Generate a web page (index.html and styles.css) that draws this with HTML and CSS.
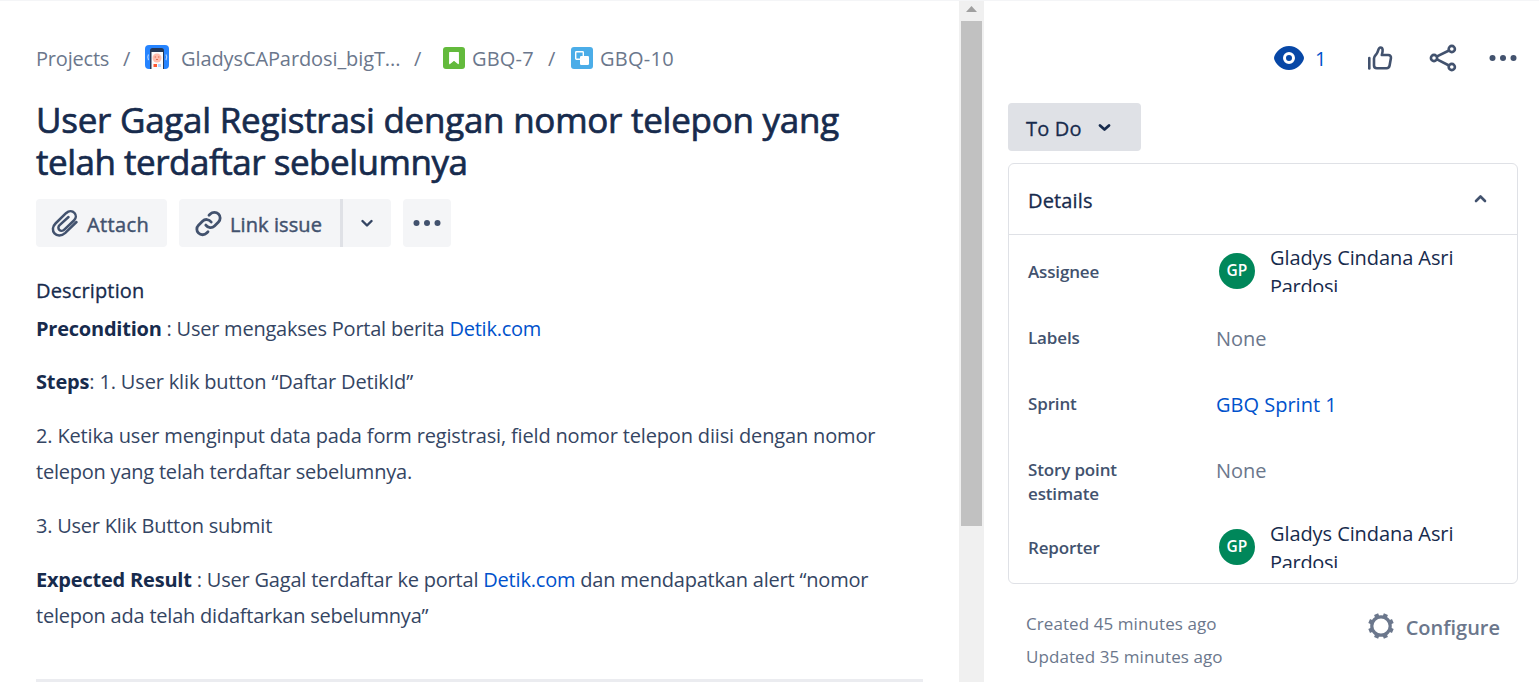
FILE: index.html
```html
<!DOCTYPE html>
<html lang="id">
<head>
<meta charset="utf-8">
<title>GBQ-10</title>
<link rel="stylesheet" href="styles.css">
</head>
<body>
<div class="page">
  <main class="issue">
    <nav class="crumbs">
      <span class="crumb-projects">Projects</span>
      <span class="sep">/</span>
      <svg class="project-icon" width="24" height="24" viewBox="0 0 24 24">
        <rect width="24" height="24" rx="4" fill="#2684ff"/>
        <path d="M3.500 9.500q-1.500 2.800 0 5.600M21 9.500q1.500 2.800 0 5.600" fill="none" stroke="#b3d4ff" stroke-width="1.200"/>
        <path d="M5 24V5.500Q5 3 7.500 3h9Q19 3 19 5.500V24z" fill="#253858"/>
        <path d="M6.500 7h11.500v17H6.500z" fill="#fafbfc"/>
        <circle cx="12" cy="13" r="4.500" fill="#ffbdad"/>
        <path d="M9.600 12h1.400M13 12h1.400M11 14.500h2" stroke="#de6b50" stroke-width="1"/>
        <path d="M8.500 19H12v3H8.500z" fill="#ff5630"/>
        <path d="M13 19h3v3h-3z" fill="#b3d4ff"/>
      </svg>
      <span class="crumb-name">GladysCAPardosi_bigT...</span>
      <span class="sep sep-name">/</span>
      <svg class="type-icon" width="22" height="22" viewBox="0 0 22 22">
        <rect width="22" height="22" rx="3" fill="#63ba3c"/>
        <path d="M6.700 5.600h8.600v11L11 13l-4.300 3.600z" fill="#fff" stroke="#fff" stroke-width="1.200" stroke-linejoin="round"/>
      </svg>
      <span class="crumb-story">GBQ-7</span>
      <span class="sep sep-story">/</span>
      <svg class="type-icon sub" width="22" height="22" viewBox="0 0 22 22">
        <rect width="22" height="22" rx="3" fill="#4bade8"/>
        <rect x="4.700" y="4.700" width="7.600" height="7.600" rx=".7" fill="none" stroke="#fff" stroke-width="1.400"/>
        <rect x="9" y="9" width="9" height="9" rx="1.300" fill="#fff"/>
      </svg>
      <span class="crumb-task">GBQ-10</span>
    </nav>
    <h1 class="title"><span class="title-a">User Gagal Registrasi dengan nomor telepon yang</span><br><span class="title-b">telah terdaftar sebelumnya</span></h1>
    <div class="toolbar">
      <button class="btn attach">
        <svg width="28" height="30" viewBox="0 0 28 30" fill="none" stroke="#42526e" stroke-width="2.500" stroke-linecap="round" stroke-linejoin="round">
          <path d="M25.500 14 14.300 24.800C10.500 28.300 5.800 28 3.500 25.400S1.300 18.600 4.500 15.500L15 5.200c3-2.700 6.500-2.400 8.500-.2s1.700 5.300-.6 7.500L13.300 21.600c-1.500 1.500-3.700 1.500-5 .2s-1.200-3.200.3-4.700L17.500 9"/>
        </svg>
        <span class="label-attach">Attach</span>
      </button>
      <div class="split">
        <button class="btn link">
          <svg width="28" height="28" viewBox="0 0 28 28" fill="none" stroke="#42526e" stroke-width="2.800" stroke-linecap="round">
            <path d="M14 22.800l-1.300 1.300c-2.200 2.200-6 2.200-8.200 0s-2.200-5.700 0-7.900l4-4c2.500-2.500 6.500-2.200 8.700.8"/>
            <path d="M15 6.300l1.300-1.300c2.200-2.200 6-2.200 8.200 0s2.200 5.700 0 7.900l-4 4c-2.500 2.500-6.500 2.200-8.700-.8"/>
          </svg>
          <span class="label-link">Link issue</span>
        </button>
        <button class="btn drop">
          <svg width="12" height="8" viewBox="0 0 12 8"><path d="M1.500 2 6 6.500l4.500-4.500" fill="none" stroke="#344563" stroke-width="2.400" stroke-linecap="round" stroke-linejoin="round"/></svg>
        </button>
      </div>
      <button class="btn more">
        <svg width="28" height="6" viewBox="0 0 28 6" fill="#42526e"><circle cx="3.500" cy="3" r="3"/><circle cx="14" cy="3" r="3"/><circle cx="24.500" cy="3" r="3"/></svg>
      </button>
    </div>
    <h2 class="section">Description</h2>
    <div class="description">
      <p class="d1"><b>Precondition</b> : User mengakses Portal berita <a>Detik.com</a></p>
      <p class="d2"><b>Steps</b>: 1. User klik button “Daftar DetikId”</p>
      <p class="d3"><span class="l1">2. Ketika user menginput data pada form registrasi, field nomor telepon diisi dengan nomor</span><br><span class="l2">telepon yang telah terdaftar sebelumnya.</span></p>
      <p class="d4">3. User Klik Button submit</p>
      <p class="d5"><span class="l1"><b>Expected Result</b> : User Gagal terdaftar ke portal <a>Detik.com</a> dan mendapatkan alert “nomor</span><br><span class="l2">telepon ada telah didaftarkan sebelumnya”</span></p>
    </div>
    <div class="divider"></div>
  </main>
  <div class="scrollbar">
    <svg width="11" height="6" viewBox="0 0 11 6"><path d="M0 6 5.500 0 11 6z" fill="#a0a0a0"/></svg>
    <div class="thumb"></div>
  </div>
  <aside class="side">
    <div class="actions">
      <svg class="eye" width="30" height="24" viewBox="0 0 30 24">
        <path d="M15 0C7 0 1.500 6.500.3 10.500Q-.2 12 .3 13.500C1.500 17.500 7 24 15 24s13.500-6.500 14.700-10.500q.5-1.500 0-3C28.500 6.500 23 0 15 0z" fill="#0747a6"/>
        <circle cx="15" cy="12" r="4.500" fill="#0747a6" stroke="#fff" stroke-width="3"/>
      </svg>
      <span class="watch">1</span>
      <svg class="thumb-up" width="26" height="26" viewBox="0 0 26 26" fill="none" stroke="#42526e" stroke-width="2.600" stroke-linecap="round" stroke-linejoin="round">
        <path d="M2.300 13v10.500"/>
        <path d="M7 20.500v-7c0-2 1-2.700 2.500-4.500 2-2.500 1.500-6.500 4-6.500 2.700 0 2.500 3.500 1.300 7.500h6.500c2 0 2.900 1.500 2.600 3.200l-1.300 7.300c-.4 2-1.500 2.700-3 2.700H9.800c-2 0-2.800-1-2.800-2.700z"/>
      </svg>
      <svg class="share" width="28" height="28" viewBox="0 0 28 28" fill="none" stroke="#42526e" stroke-width="2.600">
        <path d="M8 12.400 20 6.500M8 15.300 20 21.500"/>
        <circle cx="5" cy="14" r="3.100"/><circle cx="22.800" cy="5" r="3.100"/><circle cx="22.800" cy="23" r="3.100"/>
      </svg>
      <svg class="dots" width="28" height="6" viewBox="0 0 28 6" fill="#42526e"><circle cx="3.500" cy="3" r="3"/><circle cx="14" cy="3" r="3"/><circle cx="24.500" cy="3" r="3"/></svg>
    </div>
    <button class="status"><span class="status-text">To Do</span>
      <svg width="13" height="9" viewBox="0 0 13 9"><path d="M2 2.500l4.500 4 4.500-4" fill="none" stroke="#172b4d" stroke-width="2.800" stroke-linecap="round" stroke-linejoin="round"/></svg>
    </button>
    <section class="details">
      <header class="details-head"><span class="details-title">Details</span>
        <svg width="13" height="11" viewBox="0 0 13 11"><path d="M2 7l4.500-4.500L11 7" fill="none" stroke="#42526e" stroke-width="2.600" stroke-linecap="round" stroke-linejoin="round"/></svg>
      </header>
      <dl class="fields">
        <dt class="assignee">Assignee</dt>
        <dd class="person"><span class="avatar">GP</span><span class="who">Gladys Cindana Asri<br><span class="surname">Pardosi</span></span></dd>
        <dt class="labels">Labels</dt><dd class="none">None</dd>
        <dt class="sprint">Sprint</dt><dd class="sprint-value"><a>GBQ Sprint 1</a></dd>
        <dt class="points">Story point<br>estimate</dt><dd class="none points-value">None</dd>
        <dt class="reporter">Reporter</dt>
        <dd class="person"><span class="avatar">GP</span><span class="who">Gladys Cindana Asri<br><span class="surname">Pardosi</span></span></dd>
      </dl>
    </section>
    <footer class="foot">
      <div class="times"><div class="created">Created 45 minutes ago</div><div class="updated">Updated 35 minutes ago</div></div>
      <div class="configure">
        <svg width="26" height="26" viewBox="-13 -13 26 26">
          <circle r="9.200" fill="none" stroke="#6b778c" stroke-width="3.200"/>
          <path d="M9.240 3.830l2.600 1.080M9.240-3.830l2.600-1.080M-9.240 3.830l-2.600 1.080M-9.240-3.830l-2.600-1.080M3.830 9.240l1.080 2.600M3.830-9.240l1.080-2.600M-3.830 9.240l-1.080 2.600M-3.830-9.240l-1.080-2.600" stroke="#6b778c" stroke-width="4.400"/>
        </svg>
        <span class="configure-text">Configure</span>
      </div>
    </footer>
  </aside>
</div>
</body>
</html>
```
FILE: styles.css
```css
* { box-sizing: border-box; }
body { margin: 0; background: #fff; color: #172b4d; font-family: "Open Sans", "Noto Sans", sans-serif; font-size: 20px; overflow: hidden; }
.page { display: flex; width: 1539px; height: 682px; border-top: 1px solid #f4f5f7; }
svg { display: block; flex: none; }
a { color: #0052cc; }
span, a, b, dt { white-space: nowrap; }
button { border: 0; font: inherit; color: inherit; }

.issue { width: 959px; padding: 42px 36px 0; display: flex; flex-direction: column; }
.crumbs { display: flex; align-items: center; height: 30px; color: #6b778c; }
.crumbs > * { flex: none; }
.crumb-projects { width: 87px; letter-spacing: -.2px; }
.sep { width: 22px; }
.project-icon { margin: -3px 12px 0 0; }
.crumb-name { width: 233px; letter-spacing: -.1px; }
.sep-name { width: 29px; }
.type-icon { margin-right: 7px; margin-top: 0; }
.crumb-story { width: 76px; letter-spacing: .2px; }
.sep-story { width: 23px; }
.crumb-task { letter-spacing: .25px; }

.title { margin: 26px 0 0; font-size: 35px; line-height: 42px; font-weight: 400; -webkit-text-stroke: .7px #172b4d; }
.title-a { letter-spacing: -.26px; }
.title-b { letter-spacing: -.48px; }
.toolbar { display: flex; gap: 12px; margin-top: 16px; height: 48px; color: #42526e; -webkit-text-stroke: .45px #42526e; }
.btn { display: flex; align-items: center; background: #f4f5f7; border-radius: 4px; padding: 0; height: 48px; }
.btn span { padding-top: 2px; }
.label-attach { letter-spacing: .4px; }
.label-link { letter-spacing: .1px; }
.attach { width: 131px; padding-left: 15px; gap: 8px; }
.split { display: flex; width: 212px; }
.link { width: 161px; padding-left: 15px; gap: 8px; border-radius: 4px 0 0 4px; }
.drop { width: 51px; justify-content: center; border-left: 3px solid #dfe1e6; border-radius: 0 4px 4px 0; }
.more { width: 48px; justify-content: center; }

.section { margin: 29px 0 0; font-size: 20px; line-height: 30px; font-weight: 400; letter-spacing: .15px; -webkit-text-stroke: .3px #172b4d; }
.description { margin-top: 5px; line-height: 36px; color: #344563; letter-spacing: -.2px; }
.description p { margin: 0 0 18px; }
.description .d1 { margin-bottom: 17px; letter-spacing: -.23px; }
.d2 { letter-spacing: -.16px; }
.d3 .l1 { letter-spacing: -.16px; }
.d3 .l2 { letter-spacing: -.22px; }
.d4 { letter-spacing: -.24px; }
.d5 .l1 { letter-spacing: -.2px; }
.d5 .l2 { letter-spacing: -.22px; }
.description b { color: #172b4d; font-weight: 700; }
.divider { height: 3px; width: 887px; background: #ebecf0; margin-top: 27px; }

.scrollbar { width: 25px; background: #f0f0f0; padding: 5px 2px 0; display: flex; flex-direction: column; align-items: center; gap: 9px; }
.thumb { width: 21px; height: 505px; background: #c1c1c1; }

.side { width: 555px; padding: 42px 21px 0 24px; display: flex; flex-direction: column; }
.actions { display: flex; align-items: center; height: 29px; padding-left: 266px; }
.watch { width: 63px; padding: 2px 0 0 11px; color: #0052cc; }
.share { margin-left: 36px; }
.dots { margin-left: 32px; }
.status { display: flex; align-items: center; gap: 16px; margin-top: 31px; width: 133px; height: 48px; padding: 0 0 0 18px; background: #dfe1e6; border-radius: 4px; color: #172b4d; letter-spacing: .2px; -webkit-text-stroke: .3px #172b4d; }
.status-text { padding-top: 2px; }
.details { margin-top: 12px; height: 421px; border: 1px solid #dfe1e6; border-radius: 6px; }
.details-head { display: flex; align-items: center; justify-content: space-between; height: 71px; padding: 0 30px 0 19px; border-bottom: 1px solid #dfe1e6; letter-spacing: .15px; -webkit-text-stroke: .3px #172b4d; }
.details-title { padding-top: 2px; }
.fields { margin: 0; padding: 3px 0 0 19px; display: grid; grid-template-columns: 188px 1fr; grid-template-rows: 66px 66px 66px 78px 66px; align-items: center; }
dt { padding-top: 1px; color: #42526e; font-size: 17px; line-height: 24px; font-weight: 600; letter-spacing: -.15px; }
dd { margin: 0; }
.points { padding-top: 14px; }
.none, .sprint-value { padding-top: 2px; }
.points-value { padding: 0 0 9px; }
.none { color: #6b778c; }
.person { display: flex; align-items: center; gap: 15px; padding-left: 3px; }
.avatar { width: 36px; height: 36px; border-radius: 50%; background: #00875a; color: #fff; font-size: 15.5px; font-weight: 600; line-height: 35px; text-align: center; }
.who { height: 49px; margin-bottom: 7px; overflow: hidden; line-height: 29px; letter-spacing: -.08px; }
.surname { letter-spacing: -.3px; }
.foot { display: flex; justify-content: space-between; padding: 23px 18px 0 18px; color: #6b778c; }
.times { font-size: 17px; line-height: 33px; letter-spacing: .08px; }
.configure { display: flex; align-items: center; gap: 12px; height: 40px; font-weight: 600; }
.configure svg { margin-top: -2px; }
```
